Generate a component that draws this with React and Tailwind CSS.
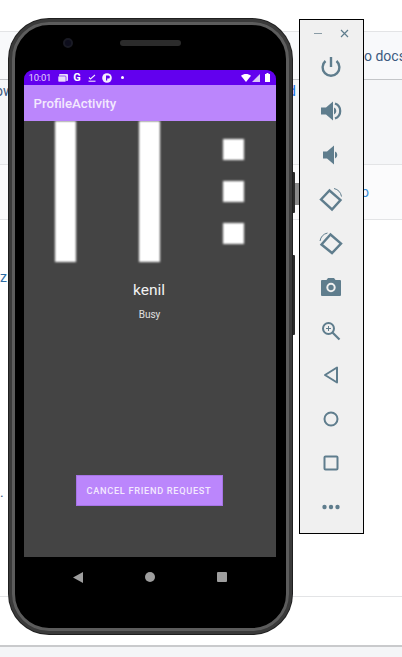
import React from 'react';

const TOOL_STROKE = '#5f7d8d';

const ToolIcon = ({ children }) => (
    <div className="flex h-[44px] items-center justify-center pr-[1px]">
        <svg width="26" height="26" viewBox="0 0 26 26" fill="none" stroke={TOOL_STROKE} strokeWidth="2">
            {children}
        </svg>
    </div>
);

const tools = [
    // power
    <><path d="M13 3v10" strokeWidth="2.4" /><path d="M7.5 7a8.4 8.4 0 1 0 11 0" strokeWidth="2.4" /></>,
    // volume up
    <><path d="M3 9.500h5l7-6v19l-7-6H3z" fill={TOOL_STROKE} stroke="none" /><path d="M17 5.500a8 8 0 0 1 0 15" strokeWidth="2.200" /><path d="M16 9.500a3.800 3.800 0 0 1 0 7" fill={TOOL_STROKE} stroke="none" /></>,
    // volume down
    <><path d="M5 9.500h4l7-6v19l-7-6H5z" fill={TOOL_STROKE} stroke="none" /><path d="M17 9.500a3.800 3.800 0 0 1 0 7" fill={TOOL_STROKE} stroke="none" /></>,
    // rotate right
    <><path d="M3 13.500L11.500 4.500 22.500 14 14 23.500z" strokeWidth="2.400" /><path d="M16 2.500a10 10 0 0 1 7.500 8" strokeWidth="1" /></>,
    // rotate left
    <><path d="M3.500 14.500L12.500 4.500 23 13.500 14 23z" strokeWidth="2.400" /><path d="M2 11a10 10 0 0 1 7.500-8" strokeWidth="1" /></>,
    // camera
    <><path d="M4 6h4.500l1.500-2h6l1.500 2H22a1 1 0 0 1 1 1v14a1 1 0 0 1-1 1H4a1 1 0 0 1-1-1V7a1 1 0 0 1 1-1z" fill={TOOL_STROKE} stroke="none" /><circle cx="13" cy="13.500" r="3.700" stroke="#f0f0f0" strokeWidth="2" /></>,
    // zoom
    <><circle cx="10.500" cy="10.500" r="5.500" /><path d="M14.500 14.500L21.500 21.500" strokeWidth="2.200" /><path d="M10.500 8v5M8 10.500h5" strokeWidth="1" /></>,
    // back
    <path d="M19 5.500v15L7 13z" strokeLinejoin="round" />,
    // home
    <circle cx="13" cy="13" r="6.500" />,
    // overview
    <rect x="6.500" y="6.500" width="13" height="13" rx="1" />,
    // more
    <><circle cx="6.500" cy="13" r="2.200" fill={TOOL_STROKE} stroke="none" /><circle cx="13" cy="13" r="2.200" fill={TOOL_STROKE} stroke="none" /><circle cx="19.500" cy="13" r="2.200" fill={TOOL_STROKE} stroke="none" /></>,
];

const StatusBar = () => (
    <div className="flex h-[15px] items-center justify-between rounded-t-[9px] bg-[#6200ee] pl-[5px] pr-[6px]">
        <div className="flex items-center text-[#e4d4fb]">
            <span className="text-[9.500px] leading-none tracking-[-0.2px]">10:01</span>
            <svg className="ml-[7px]" width="10" height="8" viewBox="0 0 10 8" fill="#e8ddfb"><rect x="1" y="0" width="9" height="7" rx="1" /><rect x="0" y="2" width="8" height="6" rx="1" stroke="#6200ee" strokeWidth="0.600" /></svg>
            <span className="ml-[5px] text-[11px] font-bold leading-none text-white">G</span>
            <svg className="ml-[7px]" width="8" height="8" viewBox="0 0 8 8" stroke="#f0e8fd" strokeWidth="1.100" fill="none"><path d="M1 3.500l1.500 1.500L7 1" /><path d="M0.500 7.200h7" /></svg>
            <svg className="ml-[6px]" width="10" height="10" viewBox="0 0 10 10"><circle cx="5" cy="5" r="4.800" fill="#f4eefd" /><path d="M4 2.500h2.400a1.400 1.400 0 0 1 0 3H5.200v2H4z" fill="#6200ee" /></svg>
            <span className="ml-[9px] h-[3px] w-[3px] rounded-full bg-white" />
        </div>
        <div className="flex items-center gap-[1px]">
            <svg width="10" height="8" viewBox="0 0 10 8" fill="#fff"><path d="M0 1.700C2.800-.5 7.200-.5 10 1.700L5 8z" /></svg>
            <svg width="8" height="8" viewBox="0 0 8 8" fill="#d9c7f7"><path d="M8 0v8H0z" /></svg>
            <svg className="ml-[4px]" width="5" height="9" viewBox="0 0 5 9" fill="#fff"><path d="M1.500 0h2v1H5v8H0V1h1.500z" /></svg>
        </div>
    </div>
);

const BlurBox = ({ className }) => <div className={`bg-white blur-[1px] ${className}`} />;

const PhoneScreen = () => (
    <div className="mr-[2px] flex h-[487px] w-[252px] flex-col">
        <StatusBar />
        <div className="flex h-[36px] items-center bg-[#bb86fc] pl-[10px] pt-[2px] shadow-[0_1px_0_#9a68d8]">
            <span className="text-[13.200px] font-medium leading-none text-[#f3e9fe]">ProfileActivity</span>
        </div>
        <div className="flex flex-1 flex-col items-center overflow-hidden bg-[#444444]">
            <div className="flex h-[141px] w-full">
                <BlurBox className="ml-[31px] h-full w-[21px]" />
                <BlurBox className="ml-[63px] h-full w-[21px]" />
                <div className="ml-[63px] flex flex-col gap-[21px] pt-[18px]">
                    <BlurBox className="h-[21px] w-[21px]" />
                    <BlurBox className="h-[21px] w-[21px]" />
                    <BlurBox className="h-[21px] w-[21px]" />
                </div>
            </div>
            <div className="mt-[19px] pr-[1px] text-[15.500px] leading-[19px] text-[#f2f2f2]">kenil</div>
            <div className="mt-[8px] text-[10px] leading-[13px] text-[#e0e0e0]">Busy</div>
            <div className="mt-[154px] mr-[1px] flex h-[31px] w-[147px] items-center justify-center bg-[#bb86fc] shadow-[0_0_0_1px_#a674e6_inset]">
                <span className="text-[9.200px] font-medium leading-none tracking-[0.7px] text-[#f3e9fe]">CANCEL FRIEND REQUEST</span>
            </div>
        </div>
    </div>
);

const Phone = () => (
    <div className="absolute left-[9px] top-[19px] flex h-[615px] w-[283px] flex-col items-center rounded-[40px] border-[3px] border-[#3a3a3a] bg-[#2e2e2e] shadow-[0_0_0_1px_#1f1f1f]">
        <div className="flex h-full w-full flex-col items-center rounded-[37px] border-[3px] border-[#5c5c5c] bg-black">
            <div className="relative h-[45px] w-full">
                <div className="absolute left-[48px] top-[13px] h-[10px] w-[10px] rounded-full border-[2px] border-[#191a24] bg-[#0d0d1c]" />
                <div className="absolute left-[105px] top-[15px] h-[6px] w-[61px] rounded-full bg-[#2b2b2b]" />
            </div>
            <PhoneScreen />
            <div className="flex h-[40px] w-full items-center justify-center gap-[62px] pr-[2px]">
                <svg width="10" height="11" viewBox="0 0 10 11" fill="#9e9e9e"><path d="M10 0v11L0 5.500z" /></svg>
                <div className="h-[10px] w-[10px] rounded-full bg-[#9e9e9e]" />
                <div className="h-[10px] w-[10px] rounded-[1px] bg-[#9e9e9e]" />
            </div>
        </div>
    </div>
);

const SideToolbar = () => (
    <div className="absolute left-[299px] top-[19px] flex h-[515px] w-[65px] flex-col border border-black bg-[#f0f0f0]">
        <div className="flex h-[25px] items-center justify-center gap-[18px] pt-[2px]">
            <div className="h-[1px] w-[8px] bg-[#8a9ca6]" />
            <svg width="9" height="9" viewBox="0 0 9 9" stroke="#5f7d8d" strokeWidth="1.200"><path d="M1 1l7 7M8 1l-7 7" /></svg>
        </div>
        {tools.map((icon, i) => (
            <ToolIcon key={i}>{icon}</ToolIcon>
        ))}
    </div>
);

export default function App() {
    return (
        <div className="relative h-[657px] w-[402px] overflow-hidden bg-white font-['Roboto',sans-serif]">
            {/* page behind the emulator */}
            <div className="h-[31px]" />
            <div className="flex h-[49px] items-center overflow-hidden whitespace-nowrap border-y border-b-[#c4c6c9] border-t-[#e3e4e6] bg-[#f8f9fb] pl-[364px] pt-[1px]">
                <span className="text-[14px] text-[#3c5a80]">o docs</span>
            </div>
            <div className="flex h-[84px] items-start bg-[#f5f6f8] pt-[2px]">
                <span className="ml-[-5px] text-[14px] leading-[18px] text-[#3c5a80]">ow</span>
                <span className="ml-[274px] text-[15px] leading-[18px] text-[#1a73e8]">d</span>
            </div>
            <div className="flex h-[56px] items-center border-y border-[#e3e4e6] bg-[#fbfbfc] pl-[361px]">
                <span className="text-[14px] leading-[18px] text-[#3b8fd8]">o</span>
            </div>
            <div className="flex h-[376px] flex-col bg-white pt-[48px]">
                <span className="text-[14px] leading-[18px] tracking-[0.5px] text-[#2e6da4]">zu</span>
                <span className="mt-[197px] text-[14px] leading-[18px] text-[#3c5a80]">.</span>
            </div>
            <div className="h-[49px] border-t border-[#e3e4e6] bg-white" />
            <div className="h-[12px] border-t-2 border-[#c9cacc] bg-[#f4f5f7]" />

            <div className="absolute left-[295px] top-[183px] h-[22px] w-[4px] bg-[#8a8a8a]" />
            <div className="absolute left-[291px] top-[172px] h-[41px] w-[4px] rounded-r-[1px] bg-[#2a2a2a]" />
            <div className="absolute left-[291px] top-[255px] h-[80px] w-[4px] rounded-r-[1px] bg-[#2a2a2a]" />

            <Phone />
            <SideToolbar />
        </div>
    );
}
